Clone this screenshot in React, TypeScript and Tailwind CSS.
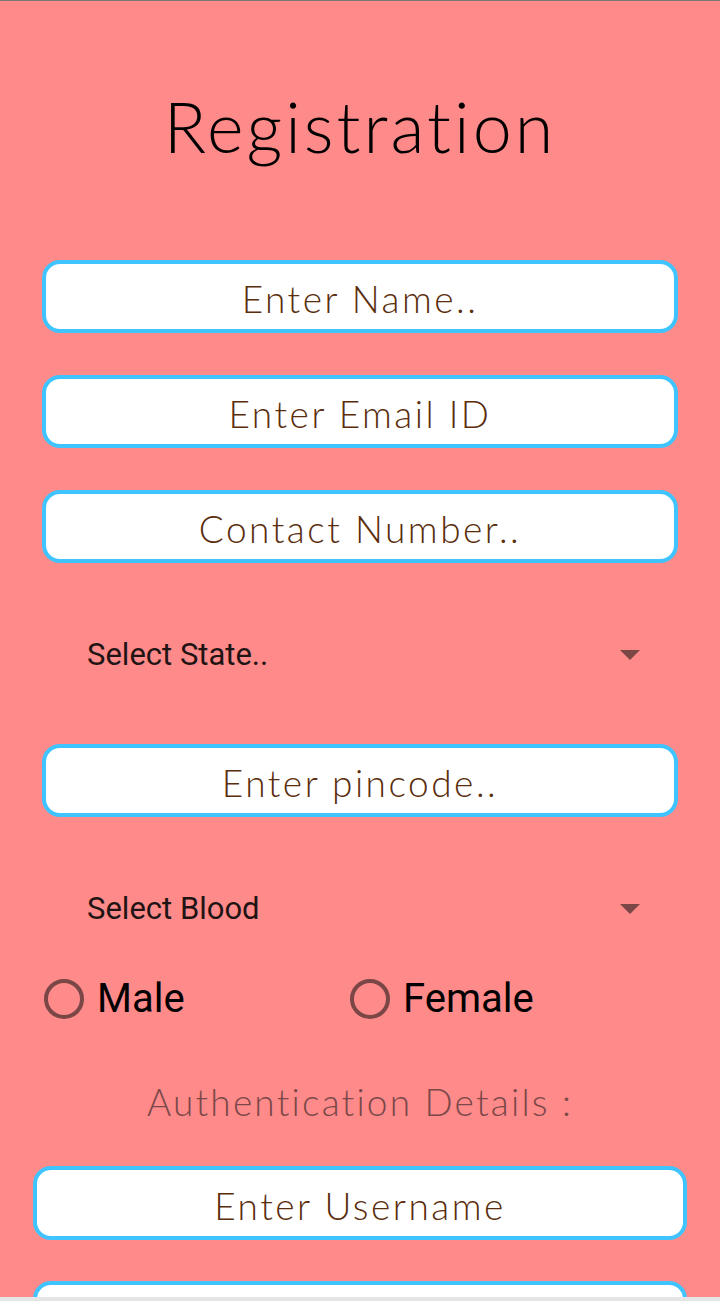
import React from 'react';

const quick = { fontFamily: 'Lato, "Open Sans", sans-serif' };
const roboto = { fontFamily: 'Roboto, "Liberation Sans", sans-serif' };

function Field({ label, wide }: { label: string; wide?: boolean }) {
  return (
    <div
      className={`${wide ? 'mx-[33px] h-[74px]' : 'mx-[42px] h-[73px]'} shrink-0 rounded-[18px] border-[4px] border-[#40c4ff] bg-white flex items-center justify-center pt-[5px] text-[37px] font-light tracking-[2.5px] text-[#5a2d0c]`}
      style={quick}
    >
      {label}
    </div>
  );
}

function Select({ label }: { label: string }) {
  return (
    <div className="mx-[42px] h-[90px] shrink-0 flex items-center justify-between pl-[45px] pr-[38px]" style={roboto}>
      <span className="text-[31px] text-[#1f1414]">{label}</span>
      <svg width="20" height="10" viewBox="0 0 20 10">
        <path d="M0 0 L20 0 L10 10 Z" fill="#7a4646" />
      </svg>
    </div>
  );
}

function Radio({ label }: { label: string }) {
  return (
    <div className="flex items-center gap-[13px]">
      <span className="w-[40px] h-[40px] rounded-full border-[4px] border-[#7a4646]" />
      <span className="text-[40px] text-black" style={roboto}>{label}</span>
    </div>
  );
}

export default function App() {
  return (
    <div className="w-[720px] h-[1301px] overflow-hidden bg-[#e5e5e5]">
      <div className="h-[1297px] overflow-hidden bg-[#ff8a8a] border-t border-[#777777] flex flex-col">
        <div className="h-[259px] shrink-0 pt-[90px] text-center">
          <h1 className="text-[70px] leading-none font-light tracking-[3px] text-black" style={quick}>Registration</h1>
        </div>
        <Field label="Enter Name.." />
        <div className="h-[42px] shrink-0" />
        <Field label="Enter Email ID" />
        <div className="h-[42px] shrink-0" />
        <Field label="Contact Number.." />
        <div className="h-[47px] shrink-0" />
        <Select label="Select State.." />
        <div className="h-[44px] shrink-0" />
        <Field label="Enter pincode.." />
        <div className="h-[47px] shrink-0" />
        <Select label="Select Blood" />
        <div className="h-[90px] shrink-0 flex items-center pl-[44px]">
          <div className="w-[306px]">
            <Radio label="Male" />
          </div>
          <Radio label="Female" />
        </div>
        <div className="h-[122px] shrink-0 flex items-center justify-center pb-[6px] text-[37px] font-light tracking-[2.2px] text-[#7a4848]" style={quick}>
          Authentication Details :
        </div>
        <Field label="Enter Username" wide />
        <div className="h-[41px] shrink-0" />
        <Field label="" wide />
      </div>
    </div>
  );
}
